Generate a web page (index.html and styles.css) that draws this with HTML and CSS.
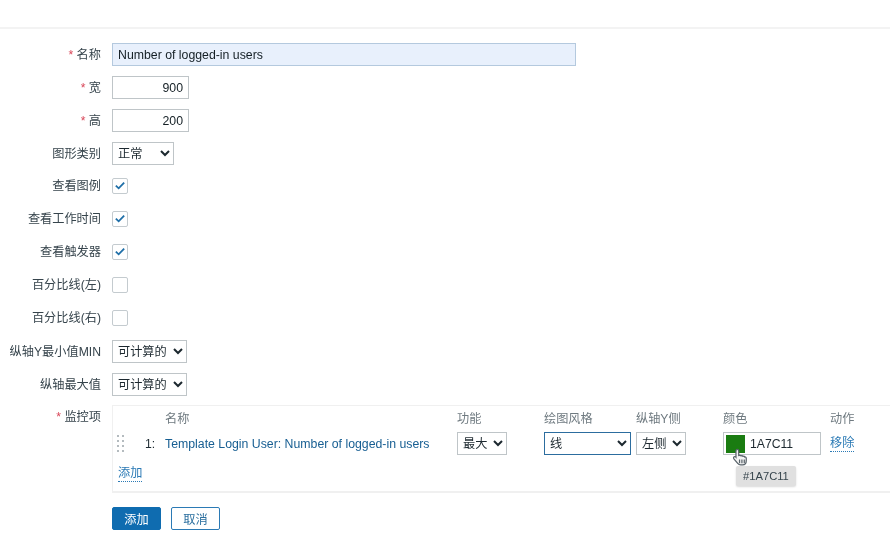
FILE: index.html
```html
<!DOCTYPE html>
<html lang="zh">
<head>
<meta charset="utf-8">
<title>Graph</title>
<link rel="stylesheet" href="styles.css">
</head>
<body>
<div class="topbar"></div>
<form class="form">
  <label class="label"><span class="req">*</span> 名称</label>
  <div class="field"><input class="input name" type="text" value="Number of logged-in users"></div>

  <label class="label"><span class="req">*</span> 宽</label>
  <div class="field"><input class="input num" type="text" value="900"></div>

  <label class="label"><span class="req">*</span> 高</label>
  <div class="field"><input class="input num" type="text" value="200"></div>

  <label class="label">图形类别</label>
  <div class="field"><select class="select type"><option>正常</option></select></div>

  <label class="label label-check">查看图例</label>
  <div class="field"><span class="check on"><svg viewBox="0 0 12 10" class="tick"><path d="M1 5.2 4.4 8.4 11 1.6"/></svg></span></div>

  <label class="label label-check">查看工作时间</label>
  <div class="field"><span class="check on"><svg viewBox="0 0 12 10" class="tick"><path d="M1 5.2 4.4 8.4 11 1.6"/></svg></span></div>

  <label class="label label-check">查看触发器</label>
  <div class="field"><span class="check on"><svg viewBox="0 0 12 10" class="tick"><path d="M1 5.2 4.4 8.4 11 1.6"/></svg></span></div>

  <label class="label label-check">百分比线(左)</label>
  <div class="field"><span class="check"></span></div>

  <label class="label label-check">百分比线(右)</label>
  <div class="field"><span class="check"></span></div>

  <label class="label">纵轴Y最小值MIN</label>
  <div class="field"><select class="select calc"><option>可计算的</option></select></div>

  <label class="label">纵轴最大值</label>
  <div class="field"><select class="select calc"><option>可计算的</option></select></div>

  <label class="label items-label"><span class="req">*</span> 监控项</label>
  <div class="items">
    <div class="items-grid">
      <span></span><span></span>
      <span class="th">名称</span>
      <span class="th">功能</span>
      <span class="th">绘图风格</span>
      <span class="th">纵轴Y侧</span>
      <span class="th">颜色</span>
      <span class="th">动作</span>

      <span class="drag"><i></i><i></i><i></i><i></i><i></i><i></i><i></i><i></i></span>
      <span class="idx">1:</span>
      <a class="item-link">Template Login User: Number of logged-in users</a>
      <select class="select func"><option>最大</option></select>
      <select class="select style focus"><option>线</option></select>
      <select class="select axis"><option>左侧</option></select>
      <div class="color">
        <span class="swatch"></span>
        <span class="hex">1A7C11</span>
        <svg class="cursor" viewBox="0 0 18 20"><path d="M5.5 1.5c1.1 0 1.6.8 1.6 1.8v4.600l.8-.2c.9-.2 1.500.1 1.800.6.8-.3 1.500-.1 1.900.5.8-.3 1.600 0 1.900.7.900-.2 1.600.3 1.600 1.300v2.700c0 2.300-1.400 4.400-3.900 4.400H9.200c-1.600 0-2.500-.8-3.400-2L2 11.400c-.6-.9-.4-1.800.3-2.200.7-.4 1.400-.1 1.900.5V3.300c0-1 .3-1.800 1.300-1.800z"/><path class="cursor-line" d="M8 12v4M10.500 12v4M13 12v4"/></svg>
        <span class="tooltip">#1A7C11</span>
      </div>
      <a class="link">移除</a>
    </div>
    <a class="link add-link">添加</a>
  </div>

  <span></span>
  <div class="buttons">
    <button class="btn primary" type="button">添加</button>
    <button class="btn secondary" type="button">取消</button>
  </div>
</form>
</body>
</html>
```

FILE: styles.css
```css
html, body {
  margin: 0;
  padding: 0;
  background: #fff;
  overflow: hidden;
}
body {
  width: 890px;
  height: 538px;
  font-family: "Liberation Sans", "Noto Sans CJK SC", sans-serif;
  font-size: 12.2px;
  color: #1f2c33;
  filter: blur(0.4px);
}
.topbar {
  height: 27px;
  border-bottom: 2px solid #f3f3f3;
}
.form {
  display: grid;
  grid-template-columns: 101px 1fr;
  column-gap: 11px;
  row-gap: 10px;
  padding-top: 14px;
}
.label {
  align-self: center;
  text-align: right;
  color: #36444c;
  line-height: 20px;
  white-space: nowrap;
}
.label-check {
  margin-bottom: 2px;
}
.req { color: #d9485a; }
.field {
  display: flex;
  align-items: center;
  height: 23px;
}
.input {
  box-sizing: border-box;
  height: 23px;
  padding: 0 5px;
  border: 1px solid #bfc5c8;
  outline: none;
  font: 12.3px "Liberation Sans", "Noto Sans CJK SC", sans-serif;
  color: #141f25;
  background: #fff;
}
.name {
  width: 464px;
  background: #e8f0fc;
  border-color: #b4c9de;
}
.num {
  width: 77px;
  text-align: right;
}
.select {
  box-sizing: border-box;
  height: 23px;
  padding: 0 0 0 1px;
  border: 1px solid #bfc5c8;
  border-radius: 0;
  background: #fff;
  color: #1c282f;
  outline: none;
  font: 12.2px "Liberation Sans", "Noto Sans CJK SC", sans-serif;
}
.type { width: 62px; }
.calc { width: 75px; }
.func { width: 50px; }
.style { width: 87px; }
.axis { width: 50px; }
.focus { border-color: #2c6d9f; }
.check {
  box-sizing: border-box;
  display: flex;
  align-items: center;
  justify-content: center;
  width: 16px;
  height: 16px;
  margin-bottom: 2px;
  border: 1px solid #c4cbcf;
  border-radius: 2px;
  background: #fff;
}
.tick {
  width: 10px;
  height: 9px;
  fill: none;
  stroke: #1f6fa8;
  stroke-width: 2.2;
}
.items-label {
  align-self: start;
  margin-top: 0;
  line-height: 23px;
}
.items {
  box-sizing: border-box;
  height: 88px;
  margin-top: -1px;
  border: 1px solid #f0f0f0;
  border-width: 1px 0 2px 1px;
  padding: 3px 0 0 4px;
}
.items-grid {
  display: grid;
  grid-template-columns: 28px 20px 292px 87px 92px 87px 107px auto;
  grid-template-rows: 17px 23px;
  row-gap: 6px;
  align-items: center;
}
.th { color: #6f7a80; }
.drag {
  display: grid;
  grid-template-columns: 2px 2px;
  grid-auto-rows: 2px;
  gap: 3px 3px;
  width: 7px;
}
.drag i {
  background: #b4bbbf;
}
.idx { color: #1f2c33; }
.item-link {
  font-size: 12.3px;
  color: #175e92;
}
.link {
  justify-self: start;
  color: #2b7ab5;
  border-bottom: 1px dotted #2b7ab5;
  line-height: 15px;
}
.add-link {
  display: inline-block;
  margin: 11px 0 0 1px;
}
.color {
  position: relative;
  box-sizing: border-box;
  display: flex;
  align-items: center;
  width: 98px;
  height: 23px;
  border: 1px solid #bfc5c8;
  background: #fff;
}
.swatch {
  width: 19px;
  height: 18px;
  margin-left: 2px;
  background: #1a7c11;
}
.hex {
  margin-left: 5px;
  color: #1c282f;
  font-size: 12.2px;
}
.cursor {
  position: absolute;
  left: 8px;
  top: 15px;
  width: 17px;
  height: 19px;
  fill: #f4f4f4;
  stroke: #59636a;
  stroke-width: 1.3;
}
.cursor-line { fill: none; }
.tooltip {
  position: absolute;
  left: 12px;
  top: 33px;
  padding: 0 7px;
  height: 20px;
  line-height: 20px;
  background: #e0e0e0;
  border-radius: 2px;
  box-shadow: 0 1px 2px rgba(0, 0, 0, .15);
  color: #36444c;
  font-size: 11.2px;
  white-space: nowrap;
}
.buttons {
  display: flex;
  gap: 10px;
  margin-top: 4px;
}
.btn {
  box-sizing: border-box;
  width: 49px;
  height: 23px;
  padding: 0;
  border-radius: 2px;
  font: 12.2px "Liberation Sans", "Noto Sans CJK SC", sans-serif;
}
.primary {
  background: #0f6cb0;
  border: 1px solid #0f6cb0;
  color: #fff;
}
.secondary {
  background: #fff;
  border: 1px solid #2b7ab5;
  color: #2b6f9f;
}
```
